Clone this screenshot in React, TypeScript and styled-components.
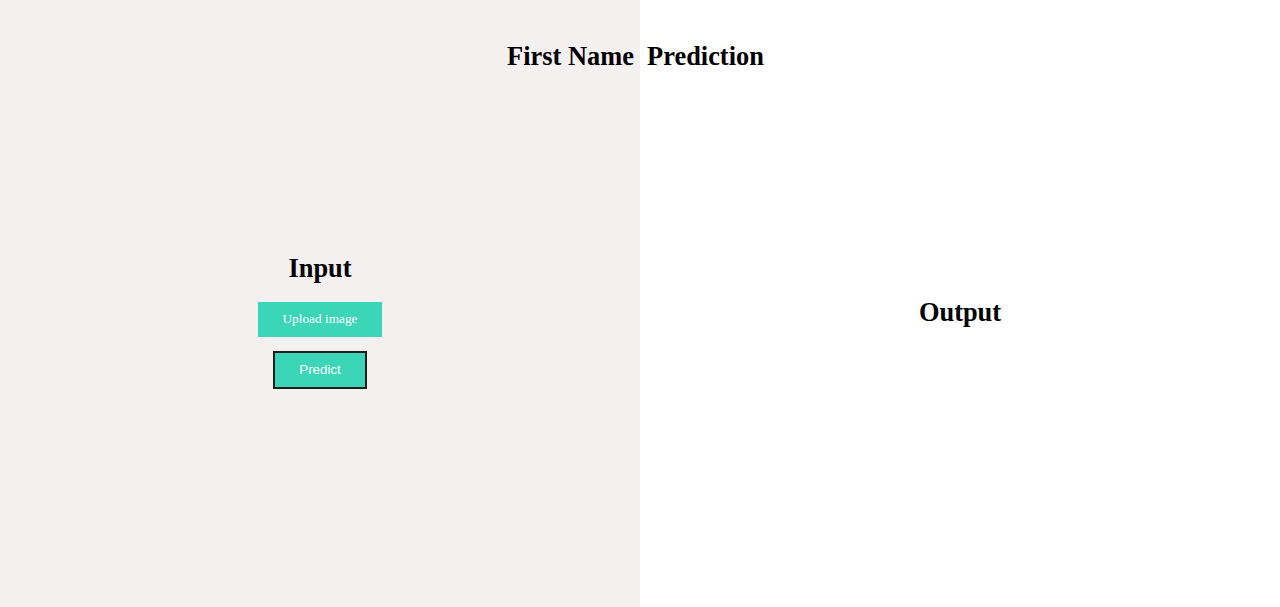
import React from "react";
import styled, { createGlobalStyle } from "styled-components";

const GlobalStyle = createGlobalStyle`
  html, body { margin: 0; padding: 0; }
  body { font-family: "Liberation Serif", "Times New Roman", serif; }
`;

const Page = styled.div`
  position: relative;
  display: grid;
  grid-template-columns: 640px 640px;
  width: 1280px;
  height: 607px;
  overflow: hidden;
`;

const Header = styled.div`
  position: absolute;
  top: 0;
  left: 0;
  right: 0;
  display: flex;
  justify-content: center;
  padding-right: 9px;
  pointer-events: none;
`;

const Title = styled.h1`
  margin: 41px 0 0;
  font-family: "Liberation Serif", "Times New Roman", serif;
  font-size: 26.4px;
  font-weight: bold;
  color: #000;
  white-space: pre;
`;

const Panel = styled.section<{ $bg: string; $shift: number }>`
  display: flex;
  flex-direction: column;
  align-items: center;
  justify-content: center;
  background: ${(p) => p.$bg};
  padding-top: ${(p) => p.$shift}px;
  box-sizing: border-box;
`;

const PanelHeading = styled.h2`
  margin: 0;
  font-family: "Liberation Serif", "Times New Roman", serif;
  font-size: 26.4px;
  font-weight: bold;
  color: #000;
`;

const UploadButton = styled.label`
  display: flex;
  align-items: center;
  justify-content: center;
  width: 124px;
  height: 35px;
  margin-top: 18px;
  background: #3bd5b8;
  color: #fff;
  font-family: "Liberation Serif", "Times New Roman", serif;
  font-size: 13.3px;
  cursor: pointer;
`;

const PredictButton = styled.button`
  width: 94px;
  height: 38px;
  margin-top: 14px;
  padding: 0;
  background: #3bd5b8;
  color: #fff;
  border: 2px solid #1e1e1e;
  font-family: "Liberation Sans", Arial, sans-serif;
  font-size: 13.3px;
  box-sizing: border-box;
  cursor: pointer;
`;

export default function App() {
  return (
    <Page>
      <GlobalStyle />
      <Panel $bg="#f4f0ef" $shift={34}>
        <PanelHeading>Input</PanelHeading>
        <UploadButton>Upload image</UploadButton>
        <PredictButton>Predict</PredictButton>
      </Panel>
      <Panel $bg="#ffffff" $shift={18}>
        <PanelHeading>Output</PanelHeading>
      </Panel>
      <Header>
        <Title>{"First Name  Prediction"}</Title>
      </Header>
    </Page>
  );
}
